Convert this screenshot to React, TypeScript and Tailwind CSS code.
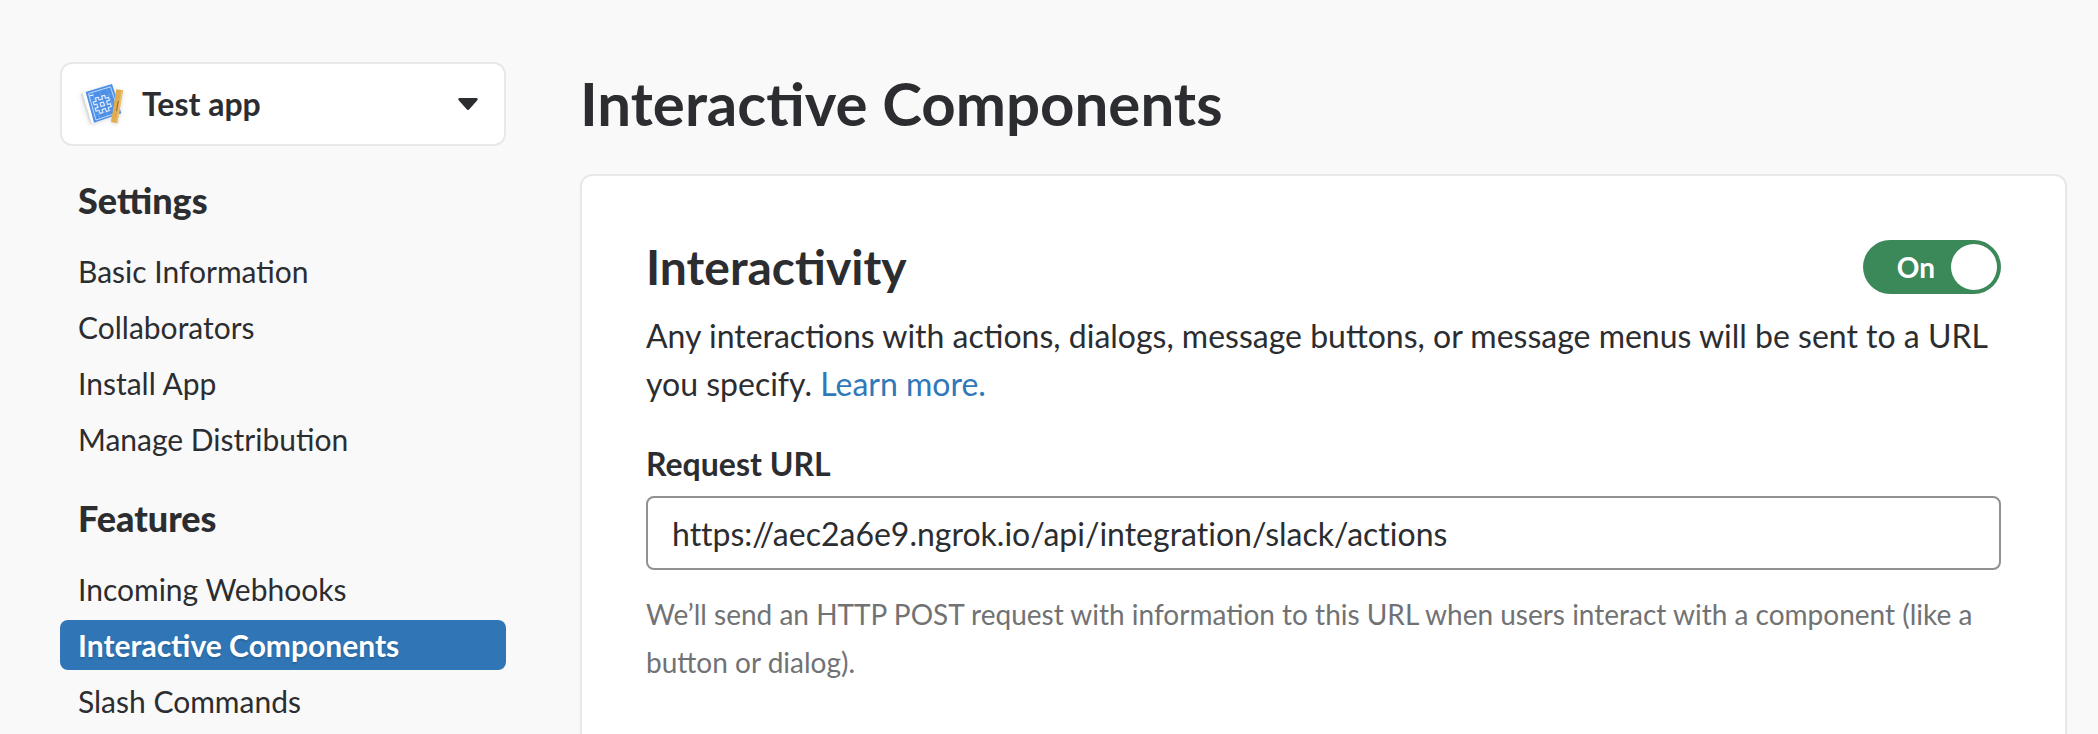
import { useState } from "react";

type NavGroup = { title: string; items: string[] };

const groups: NavGroup[] = [
  {
    title: "Settings",
    items: ["Basic Information", "Collaborators", "Install App", "Manage Distribution"],
  },
  {
    title: "Features",
    items: ["Incoming Webhooks", "Interactive Components", "Slash Commands"],
  },
];

function AppIcon() {
  return (
    <svg viewBox="0 0 48 44" className="h-11 w-12 shrink-0 drop-shadow-sm" aria-hidden="true">
      <path d="M.7 12 5.7 10 14 40.700 10 41.700Z" fill="#dcdcdc" />
      <path d="M2.700 11.200 5.700 10 14.500 40.500 11.700 41.300Z" fill="#fff" />
      <path d="M5.700 10 32 2 41.300 31.300 14 40.700Z" fill="#4c8fe6" />
      <g stroke="#6ba3ec" strokeWidth=".8" fill="none">
        <path d="M12 9 20 37M19 7 28 35M26 5 36 32M8 19 35 11M11 27 37 19M13 34 39 26" />
      </g>
      <path d="M8.500 11.500 30.500 4.800 38.700 30.300 16 38Z" fill="none" stroke="#c4dbfa" strokeWidth="1" />
      <path d="M9.500 14 13.500 12.800" stroke="#fff" strokeWidth="1.200" />
      <g transform="translate(22.300 22.300) rotate(-17)" fill="none" stroke="#e4efff" strokeWidth="1.100" strokeLinejoin="round">
        <path d="M-4.800-8H-1.800V-5H1.800V-8H4.800V-4.800H8V-1.800H5V1.800H8V4.800H4.800V8H1.800V5H-1.800V8H-4.800V4.800H-8V1.800H-5V-1.800H-8V-4.800H-4.800Z" />
        <path d="M-1.800-1.800H1.800V1.800H-1.800Z" />
      </g>
      <path d="M36.300 7.300 43 8.300 37.300 41.300 31 40Z" fill="#e0ac4f" />
      <path d="M41.300 8 43 8.300 37.300 41.300 35.900 41Z" fill="#ecc06f" />
      <path d="M38.300 19 36.500 29" stroke="#8d6b30" strokeWidth="1" />
    </svg>
  );
}

function Sidebar() {
  return (
    <aside className="w-[446px] shrink-0">
      <button
        type="button"
        className="flex h-[84px] w-full items-center rounded-xl border-2 border-[#e8e8e8] bg-white pr-[26px] pl-[18px] text-left"
      >
        <AppIcon />
        <span className="ml-3.5 flex-1 text-[32px] leading-10 font-bold">Test app</span>
        <svg viewBox="0 0 20 12" className="h-3 w-5" aria-hidden="true">
          <path d="M1.500 0H18.500Q20.500.5 19.300 2.200L11.500 11Q10 12.800 8.500 11L.7 2.200Q-.5.5 1.500 0Z" fill="#2c2d30" />
        </svg>
      </button>
      <nav className="mt-[30px] flex flex-col gap-[30px]">
        {groups.map((group) => (
          <section key={group.title}>
            <h2 className="px-[18px] font-['Lato_Black','Lato',sans-serif] text-[36px] leading-12 font-black">
              {group.title}
            </h2>
            <ul className="mt-[22px] flex flex-col gap-1.5">
              {group.items.map((item) => (
                <li key={item}>
                  <a
                    href="#"
                    aria-current={item === "Interactive Components" ? "page" : undefined}
                    className={
                      item === "Interactive Components"
                        ? "block rounded-lg bg-[#3075b5] px-[18px] text-[30px] leading-[50px] font-bold text-white text-shadow-[0_2px_2px_rgba(0,0,0,0.15)]"
                        : "block rounded-lg px-[18px] text-[30px] leading-[50px]"
                    }
                  >
                    {item}
                  </a>
                </li>
              ))}
            </ul>
          </section>
        ))}
      </nav>
    </aside>
  );
}

export default function App() {
  const [on, setOn] = useState(true);
  const [url, setUrl] = useState("https://aec2a6e9.ngrok.io/api/integration/slack/actions");

  return (
    <div className="flex h-screen gap-[74px] overflow-hidden bg-[#f9f9f9] pt-[62px] pr-[31px] pl-[60px] font-['Lato',sans-serif] text-[#2c2d30]">
      <Sidebar />
      <main className="min-w-0 flex-1">
        <h1 className="text-[60px] leading-[82px] font-bold">Interactive Components</h1>
        <section className="mt-[30px] rounded-xl border-2 border-[#e8e8e8] bg-white px-16 pt-[61px] pb-16 shadow-xs">
          <div className="flex items-center justify-between">
            <h2 className="text-[48px] leading-[60px] font-bold">Interactivity</h2>
            <button
              type="button"
              role="switch"
              aria-checked={on}
              aria-label="Interactivity"
              onClick={() => setOn(!on)}
              className="flex h-[54px] w-[138px] items-center justify-end gap-4 rounded-full bg-[#3b8859] p-1 text-[28px] font-bold text-white"
            >
              <span>{on ? "On" : "Off"}</span>
              <span className="size-[46px] rounded-full bg-white" />
            </button>
          </div>
          <p className="mt-[15px] text-[32px] leading-12">
            Any interactions with actions, dialogs, message buttons, or message menus will be sent to a URL
            you specify.{" "}
            <a href="#" className="text-[#2f78b9]">
              Learn more.
            </a>
          </p>
          <label htmlFor="request-url" className="mt-8 block text-[32px] leading-12 font-bold">
            Request URL
          </label>
          <input
            id="request-url"
            type="text"
            value={url}
            onChange={(e) => setUrl(e.target.value)}
            className="mt-2 block h-[74px] w-full rounded-lg border-2 border-[#919193] bg-white px-6 text-[32px] [font-variant-ligatures:none]"
          />
          <p className="mt-5 text-[28px] leading-12 text-[#717274]">
            We’ll send an HTTP POST request with information to this URL when users interact with a component
            (like a button or dialog).
          </p>
        </section>
      </main>
    </div>
  );
}
